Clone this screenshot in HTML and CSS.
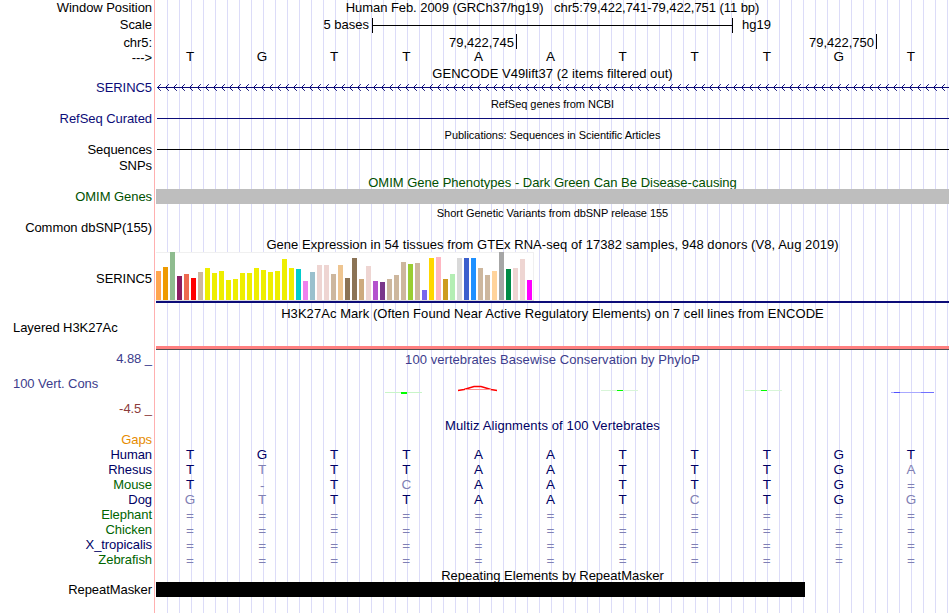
FILE: index.html
```html
<!DOCTYPE html>
<html lang="en">
<head>
    <meta charset="UTF-8">
    <meta name="viewport" content="width=device-width, initial-scale=1.0">
    <title>Genome Browser</title>
    <link rel="stylesheet" href="styles.css">
</head>
<body>
    <div class="browser">
        <!-- Position, scale and ruler -->
        <div class="row h16">
            <div class="label">Window Position</div>
            <div class="title t-pos">Human Feb. 2009 (GRCh37/hg19) &nbsp; chr5:79,422,741-79,422,751 (11 bp)</div>
        </div>
        <div class="row h18">
            <div class="label">Scale</div>
            <div class="scale">
                <span class="scale-left">5 bases</span>
                <span class="scale-bar"></span>
                <span>hg19</span>
            </div>
        </div>
        <div class="row h17">
            <div class="label">chr5:</div>
            <div class="ruler">
                <span class="tick">79,422,745</span>
                <span class="tick">79,422,750</span>
            </div>
        </div>
        <div class="row h14">
            <div class="label arrow">---&gt;</div>
            <div class="bases top-bases" data-seq="TGTTAATTTGT"></div>
        </div>

        <!-- Genes -->
        <div class="row h17"><div class="title t-gencode">GENCODE V49lift37 (2 items filtered out)</div></div>
        <div class="row h13">
            <div class="label navy">SERINC5</div>
            <svg class="gene-line" width="793" height="13">
                <defs>
                    <pattern id="chevron" width="8" height="13" patternUnits="userSpaceOnUse">
                        <path d="M4.8 2.2L1.5 5.5L4.8 8.8" fill="none" stroke="#0c0c78" stroke-width="1"/>
                    </pattern>
                </defs>
                <rect width="793" height="13" fill="url(#chevron)"/>
                <rect x="1" y="5" width="792" height="1" fill="#0c0c78"/>
            </svg>
        </div>
        <div class="row h17"><div class="title small">RefSeq genes from NCBI</div></div>
        <div class="row h14">
            <div class="label navy">RefSeq Curated</div>
            <div class="line navy"></div>
        </div>
        <div class="row h17"><div class="title small">Publications: Sequences in Scientific Articles</div></div>
        <div class="row h14">
            <div class="label">Sequences</div>
            <div class="line"></div>
        </div>
        <div class="row h17"><div class="label">SNPs</div></div>
        <div class="row h15"><div class="title low green">OMIM Gene Phenotypes - Dark Green Can Be Disease-causing</div></div>
        <div class="row h15">
            <div class="label green">OMIM Genes</div>
            <div class="block gray"></div>
        </div>
        <div class="row h17"><div class="title small">Short Genetic Variants from dbSNP release 155</div></div>
        <div class="row h14"><div class="label">Common dbSNP(155)</div></div>

        <!-- GTEx expression -->
        <div class="row h17"><div class="title low t-gtex">Gene Expression in 54 tissues from GTEx RNA-seq of 17382 samples, 948 donors (V8, Aug 2019)</div></div>
        <div class="row h51">
            <div class="label">SERINC5</div>
            <div class="gtex">
                <div class="bars" id="gtexBars"></div>
            </div>
        </div>

        <!-- Regulation -->
        <div class="row h19"><div class="title t-h3k">H3K27Ac Mark (Often Found Near Active Regulatory Elements) on 7 cell lines from ENCODE</div></div>
        <div class="row h28">
            <div class="label left h3k-label">Layered H3K27Ac</div>
            <div class="h3k"></div>
        </div>

        <!-- Conservation -->
        <div class="row h17">
            <div class="label blue">4.88 _</div>
            <div class="title low blue t-phylop">100 vertebrates Basewise Conservation by PhyloP</div>
        </div>
        <div class="row h34">
            <div class="label left blue">100 Vert. Cons</div>
            <svg class="phylop" width="793" height="34">
                <rect x="229" y="25" width="37" height="1" fill="#c8f5c8"/>
                <rect x="245" y="25" width="6" height="2" fill="#00ff00"/>
                <path d="M302 23.5L308 22.5L318 19.5H325L335 22.5L341 23.5" fill="none" stroke="#ff0000" stroke-width="1.5"/>
                <path d="M309 22.5H335" stroke="#ff9090" stroke-width="1"/>
                <rect x="445" y="23" width="37" height="1" fill="#d8f5d8"/>
                <rect x="461" y="23" width="6" height="1" fill="#00ff00"/>
                <rect x="589" y="23" width="37" height="1" fill="#d8f5d8"/>
                <rect x="605" y="23" width="6" height="1" fill="#00ff00"/>
                <rect x="735" y="25" width="43" height="1" fill="#a8a8ff"/>
                <rect x="738" y="25" width="6" height="1" fill="#5050ff"/>
                <rect x="765" y="25" width="13" height="1" fill="#7070ff"/>
            </svg>
        </div>
        <div class="row h16"><div class="label maroon">-4.5 _</div></div>
        <div class="row h16"><div class="title low darkblue t-multiz">Multiz Alignments of 100 Vertebrates</div></div>
        <div class="row h14"><div class="label orange">Gaps</div></div>
        <div id="alignments"></div>

        <!-- Repeats -->
        <div class="row h15"><div class="title low">Repeating Elements by RepeatMasker</div></div>
        <div class="row h15">
            <div class="label">RepeatMasker</div>
            <div class="block repeat"></div>
        </div>
    </div>

    <script>
        // lower case = differs from human, drawn in the light color
        const species = [
            ['Human', 'darkblue', 'TGTTAATTTGT'],
            ['Rhesus', 'darkblue', 'TtTTAATTTGa'],
            ['Mouse', 'darkgreen', 'T-TcAATTTG='],
            ['Dog', 'darkblue', 'gtTTAATcTGg'],
            ['Elephant', 'darkgreen', '==========='],
            ['Chicken', 'darkgreen', '==========='],
            ['X_tropicalis', 'darkblue', '==========='],
            ['Zebrafish', 'darkgreen', '===========']
        ];

        // height and color of each tissue bar
        const tissues = [
            [29, '#ffa54f'], [33, '#ee9a00'], [48, '#8fbc8f'], [24, '#8b1c62'], [26, '#ee6a50'], [22, '#ff0000'],
            [28, '#cdb79e'], [32, '#eeee00'], [27, '#eeee00'], [29, '#eeee00'], [20, '#eeee00'], [21, '#eeee00'],
            [27, '#eeee00'], [27, '#eeee00'], [32, '#eeee00'], [30, '#eeee00'], [28, '#eeee00'], [29, '#eeee00'],
            [41, '#eeee00'], [32, '#eeee00'], [31, '#00cdcd'], [19, '#ee82ee'], [28, '#9ac0cd'], [35, '#eed5d2'],
            [35, '#eed5d2'], [26, '#cdb79e'], [35, '#eec591'], [22, '#8b7355'], [42, '#8b7355'], [21, '#cdaa7d'],
            [34, '#eed5d2'], [19, '#b452cd'], [18, '#7a378b'], [21, '#cdb79e'], [25, '#cdb79e'], [38, '#cdb79e'],
            [36, '#9acd32'], [37, '#cdb79e'], [10, '#7a67ee'], [42, '#ffd700'], [43, '#ffb6c1'], [21, '#cd9b1d'],
            [26, '#b4eeb4'], [42, '#d9d9d9'], [42, '#3a5fcd'], [42, '#1e90ff'], [32, '#cdb79e'], [25, '#cdb79e'],
            [29, '#ffd39b'], [48, '#a6a6a6'], [31, '#008b45'], [32, '#eed5d2'], [41, '#eed5d2'], [20, '#ff00ff']
        ];

        function renderBases(seq) {
            return seq.split('').map(base => {
                if (base === '=' || base === '-') return `<span class="light gap">${base}</span>`;
                const light = base === base.toLowerCase();
                return `<span class="${light ? 'light' : ''}">${base.toUpperCase()}</span>`;
            }).join('');
        }

        document.querySelectorAll('[data-seq]').forEach(el => {
            el.innerHTML = renderBases(el.dataset.seq);
        });

        document.getElementById('alignments').innerHTML = species.map(([name, color, seq]) => `
            <div class="row h15">
                <div class="label ${color}">${name}</div>
                <div class="bases darkblue">${renderBases(seq)}</div>
            </div>`).join('');

        document.getElementById('gtexBars').innerHTML = tissues.map(([height, color]) =>
            `<span style="height:${height}px;background:${color}"></span>`).join('');
    </script>
</body>
</html>
```
FILE: styles.css
```css
body {
    margin: 0;
    background-color: #fff;
    color: #000;
    font-family: "Liberation Sans", Arial, sans-serif;
    font-size: 13px;
    overflow: hidden;
}

/* guide lines every 12px, red line at the label edge */
.browser {
    box-sizing: border-box;
    width: 949px;
    height: 613px;
    background-image:
        linear-gradient(#ffb0b0, #ffb0b0),
        repeating-linear-gradient(to right, #dcdcf8 0, #dcdcf8 1px, transparent 1px, transparent 12px);
    background-size: 1px 100%, 782px 100%;
    background-position: 154px 0, 167px 0;
    background-repeat: no-repeat;
}

.row {
    display: grid;
    grid-template-columns: 152px 793px;
    column-gap: 4px;
    white-space: nowrap;
}

.h13 { height: 13px; line-height: 11px; }
.h14 { height: 14px; line-height: 14px; }
.h15 { height: 15px; line-height: 15px; }
.h16 { height: 16px; line-height: 16px; }
.h17 { height: 17px; line-height: 17px; }
.h18 { height: 18px; line-height: 18px; }
.h19 { height: 19px; line-height: 21px; }
.h28 { height: 28px; line-height: 28px; }
.h34 { height: 34px; line-height: 34px; }
.h51 { height: 51px; line-height: 53px; }

.label {
    grid-column: 1;
    text-align: right;
    letter-spacing: -0.06px;
}

.label.left {
    text-align: left;
    padding-left: 13px;
}

.h3k-label {
    line-height: 12px;
}

.title {
    grid-column: 2;
    text-align: center;
}

.low {
    padding-top: 1px;
}

.small {
    padding-top: 1px;
    font-size: 11px;
    letter-spacing: -0.04px;
}

.t-pos { letter-spacing: -0.06px; }
.t-gencode { letter-spacing: 0.05px; }
.t-gtex { letter-spacing: 0.055px; }
.t-h3k { letter-spacing: 0.06px; }
.t-phylop { letter-spacing: 0.06px; }
.t-multiz { letter-spacing: 0.11px; }

.navy { color: #0c0c78; }
.darkblue { color: #000064; }
.blue { color: #3c3c8c; }
.green { color: #005000; }
.darkgreen { color: #006400; }
.orange { color: #e68c00; }
.maroon { color: #8c3c3c; }

/* Scale and ruler */
.scale {
    display: flex;
    align-items: center;
}

.scale-left {
    width: 213px;
    margin-right: 3px;
    text-align: right;
}

.scale-bar {
    box-sizing: border-box;
    width: 361px;
    height: 15px;
    margin-right: 9px;
    border: solid #000;
    border-width: 0 1px;
    background: linear-gradient(#000, #000) 0 7px / 100% 1px no-repeat;
}

.ruler {
    display: flex;
}

.tick {
    box-sizing: border-box;
    width: 360px;
    height: 15px;
    padding-right: 2px;
    border-right: 1px solid #000;
    text-align: right;
}

.tick:first-child {
    width: 361px;
}

.bases {
    display: grid;
    grid-template-columns: repeat(11, 1fr);
    margin-left: -2px;
    margin-right: 2px;
    font-size: 13.5px;
    text-align: center;
}

.top-bases {
    line-height: 12px;
}

.light {
    color: #8080b4;
}

.gap {
    padding-top: 1px;
}

/* Track items */
.line {
    height: 1px;
    margin: 6px 0 0 1px;
    background-color: currentColor;
}

.block {
    height: 15px;
}

.gray {
    background-color: #bebebe;
}

.repeat {
    width: 649px;
    background-color: #000;
}

.gtex {
    box-sizing: border-box;
    height: 51px;
    border-bottom: 2px solid #0c0c78;
}

.bars {
    box-sizing: border-box;
    display: flex;
    align-items: flex-end;
    gap: 2px;
    width: 378px;
    height: 49px;
    border-bottom: 1px solid #dcdcdc;
    background-color: #fff;
    box-shadow: inset 0 1px #f0f0f0, inset -1px 0 #f0f0f0;
}

.bars span {
    width: 5px;
}

.h3k {
    height: 3px;
    margin-top: 24px;
    background-color: #ff8080;
    border-bottom: 1px solid #505050;
}
```
